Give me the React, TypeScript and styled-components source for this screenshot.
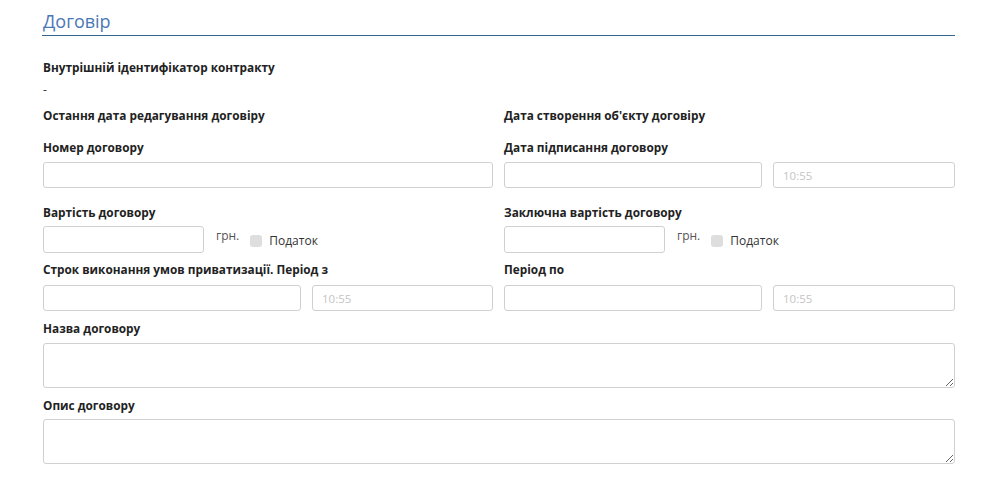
import styled, { createGlobalStyle } from 'styled-components';

const GlobalStyle = createGlobalStyle`
  body {
    margin: 0;
    background: #fff;
    font-family: "Open Sans", "Liberation Sans", sans-serif;
    color: #222;
  }
`;

const Page = styled.div`
  padding: 0 45px 20px 43px;
  width: 912px;
`;

const Title = styled.h2`
  margin: 0 0 22px -1px;
  padding: 8px 0 1px 1px;
  font-size: 18px;
  line-height: 26px;
  font-weight: 400;
  color: #4a78b5;
  border-bottom: 1px solid #33658f;
`;

const Row = styled.div<{ $mb?: number }>`
  display: grid;
  grid-template-columns: 450px 451px;
  column-gap: 11px;
  margin-bottom: ${({ $mb }) => ($mb ?? 8)}px;
`;

const Full = styled.div<{ $mb?: number }>`
  margin-bottom: ${({ $mb }) => ($mb ?? 8)}px;
`;

const Label = styled.div<{ $mb?: number }>`
  font-size: 11.8px;
  line-height: 18px;
  font-weight: 700;
  color: #222;
  margin-bottom: ${({ $mb }) => ($mb ?? 6)}px;
  white-space: nowrap;
`;

const Value = styled.div`
  font-size: 12px;
  line-height: 18px;
  color: #333;
`;

const Input = styled.input<{ $w?: number; $h?: number }>`
  box-sizing: border-box;
  display: block;
  width: ${({ $w }) => ($w ? `${$w}px` : '100%')};
  height: ${({ $h }) => ($h ?? 26)}px;
  border: 1px solid #d0d0d0;
  border-radius: 3px;
  padding: 0 9px;
  font-family: inherit;
  font-size: 11.5px;
  color: #333;
  background: #fff;
  outline: none;

  &::placeholder {
    color: #c4c4c4;
  }
`;

const DateTime = styled.div`
  display: grid;
  grid-template-columns: 258px 1fr;
  column-gap: 11px;
`;

const PriceLine = styled.div`
  display: flex;
  align-items: flex-start;
`;

const Currency = styled.span`
  margin: 2px 0 0 12px;
  font-size: 12px;
  line-height: 16px;
  color: #555;
`;

const Tax = styled.label`
  display: flex;
  align-items: center;
  margin: 7px 0 0 11px;
  font-size: 12px;
  line-height: 16px;
  color: #333;
`;

const Box = styled.span`
  display: inline-block;
  width: 12px;
  height: 12px;
  border-radius: 3px;
  background: #dedede;
  margin-right: 7px;
`;

const TextArea = styled.textarea`
  box-sizing: border-box;
  display: block;
  width: 912px;
  height: 45px;
  border: 1px solid #d0d0d0;
  border-radius: 3px;
  font-family: inherit;
  font-size: 12px;
  outline: none;
`;

const Price = () => (
	<PriceLine>
		<Input $w={161} $h={27} />
		<Currency>грн.</Currency>
		<Tax>
			<Box />
			Податок
		</Tax>
	</PriceLine>
);

const DateTimeInput = () => (
	<DateTime>
		<Input />
		<Input placeholder="10:55" />
	</DateTime>
);

export default function App() {
	return (
		<>
			<GlobalStyle />
			<Page>
				<Title>Договір</Title>
				<Full $mb={7}>
					<Label $mb={5}>Внутрішній ідентифікатор контракту</Label>
					<Value>-</Value>
				</Full>
				<Row $mb={14}>
					<Label $mb={0}>Остання дата редагування договіру</Label>
					<Label $mb={0}>Дата створення об'єкту договіру</Label>
				</Row>
				<Row $mb={15}>
					<div>
						<Label>Номер договору</Label>
						<Input />
					</div>
					<div>
						<Label>Дата підписання договору</Label>
						<DateTimeInput />
					</div>
				</Row>
				<Row $mb={7}>
					<div>
						<Label $mb={5}>Вартість договору</Label>
						<Price />
					</div>
					<div>
						<Label $mb={5}>Заключна вартість договору</Label>
						<Price />
					</div>
				</Row>
				<Row $mb={8}>
					<div>
						<Label $mb={7}>Строк виконання умов приватизації. Період з</Label>
						<DateTimeInput />
					</div>
					<div>
						<Label $mb={7}>Період по</Label>
						<DateTimeInput />
					</div>
				</Row>
				<Full $mb={8}>
					<Label>Назва договору</Label>
					<TextArea />
				</Full>
				<Full>
					<Label $mb={5}>Опис договору</Label>
					<TextArea />
				</Full>
			</Page>
		</>
	);
}
